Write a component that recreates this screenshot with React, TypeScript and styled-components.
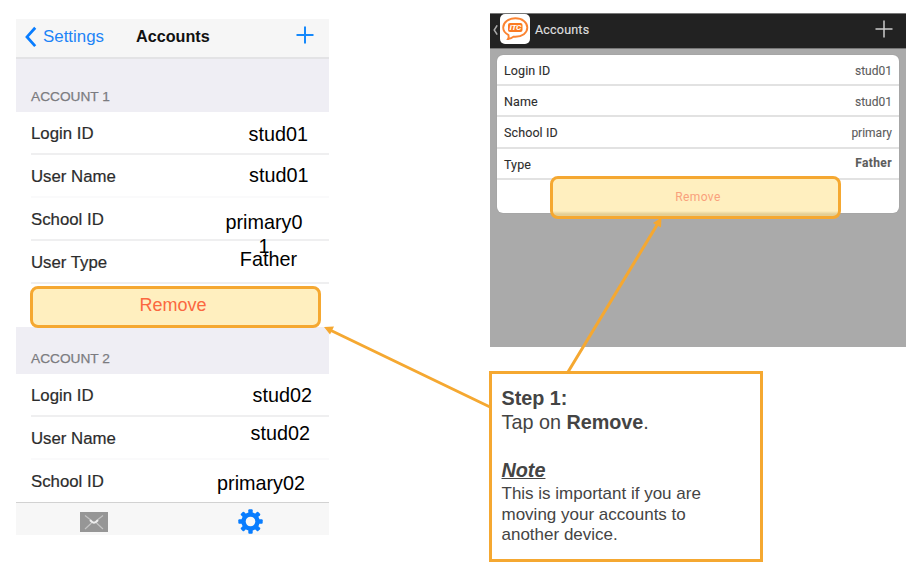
import React from "react";
import styled, { createGlobalStyle } from "styled-components";

const ORANGE = "#f5a831";

const GlobalStyle = createGlobalStyle`
  * { box-sizing: border-box; }
  body { margin: 0; background: #fff; font-family: "Liberation Sans", Arial, sans-serif; overflow: hidden; }
`;

const Page = styled.main`
  position: relative;
  width: 919px;
  height: 570px;
  display: grid;
  grid-template-columns: 313px 417px;
  column-gap: 160px;
  align-items: start;
  padding: 13px 0 0 16px;
`;

const Phone = styled.section`
  margin-top: 6px;
  display: flex;
  flex-direction: column;
  height: 516px;
  background: #fff;
`;

const NavBar = styled.header`
  flex: none;
  height: 40px;
  display: grid;
  grid-template-columns: 112px 1fr 33px;
  align-items: start;
  padding: 7px 0 0 8px;
  background: #f6f6f6;
  border-bottom: 2px solid #e3e3e5;
`;

const BackLink = styled.a`
  display: flex;
  align-items: center;
  gap: 6px;
  height: 22px;
  color: #1d84f7;
  font-size: 16.9px;
  line-height: 22px;
`;

const NavTitle = styled.h1`
  margin: 0;
  height: 22px;
  font-size: 16.2px;
  line-height: 21px;
  color: #111;
`;

const SectionHead = styled.div<{ $height: number }>`
  flex: none;
  height: ${(p) => p.$height}px;
  display: flex;
  align-items: flex-end;
  padding: 0 0 7px 15px;
  background: #efeef4;
  color: #7b7b80;
  font-size: 13.7px;
  line-height: 17px;
  -webkit-text-stroke: 0.25px #7b7b80;
`;

const Row = styled.div<{ $faint?: boolean; $last?: boolean }>`
  flex: none;
  height: ${(p) => (p.$last ? 42 : 43)}px;
  margin-left: 15px;
  display: flex;
  justify-content: space-between;
  border-bottom: ${(p) => (p.$last ? "0" : "2px")} solid ${(p) => (p.$faint ? "#fafafb" : "#efeff0")};
`;

const RowLabel = styled.span`
  padding-top: 11px;
  font-size: 16.8px;
  line-height: 21px;
  color: #2c2c2c;
  -webkit-text-stroke: 0.2px #2c2c2c;
`;

const RowValue = styled.span<{ $right: number; $top: number; $width?: number }>`
  width: ${(p) => (p.$width ? `${p.$width}px` : "auto")};
  height: 22px;
  margin: ${(p) => p.$top}px ${(p) => p.$right}px 0 0;
  text-align: center;
  overflow-wrap: anywhere;
  font-size: 19.8px;
  line-height: 24px;
  color: #000;
`;

const HighlightButton = styled.button<{ $android?: boolean }>`
  position: relative;
  flex: none;
  z-index: 1;
  display: block;
  width: 291px;
  height: ${(p) => (p.$android ? 43 : 42)}px;
  padding: ${(p) => (p.$android ? "0 0 1px 5px" : "0 5px 4px 0")};
  border: 3px solid ${ORANGE};
  border-radius: 8px;
  background: ${(p) => (p.$android ? "linear-gradient(#ffefbf 35px, #e3cf96 38px) border-box" : "#ffefbf")};
  color: ${(p) => (p.$android ? "#f9a17c" : "#fb6840")};
  font: ${(p) => (p.$android ? '12px Roboto, sans-serif' : '18px "Liberation Sans", sans-serif')};
  letter-spacing: ${(p) => (p.$android ? "0.4px" : "0")};
`;

const RemoveRow = styled.div`
  flex: none;
  height: 43px;
  padding: 2px 0 0 14px;
`;

const TabBar = styled.nav`
  flex: none;
  height: 33px;
  margin-top: auto;
  display: grid;
  grid-template-columns: 1fr 1fr;
  justify-items: center;
  align-items: center;
  padding: 5px 0 0;
  border-top: 1px solid #d2d2d2;
  background: #f7f7f7;
`;

const RightColumn = styled.div`
  display: flex;
  flex-direction: column;
  gap: 24px;
  align-items: flex-start;
`;

const Tablet = styled.section`
  width: 416px;
  height: 334px;
  margin-left: 1px;
  background: #aaa;
  font-family: Roboto, sans-serif;
`;

const ActionBar = styled.header`
  height: 36px;
  display: flex;
  align-items: center;
  padding: 0 13px 0 3px;
  border-top: 1px solid #777;
  border-bottom: 1px solid #777;
  background: #222;
  color: #ddd;
  font-size: 12.5px;
  letter-spacing: 0.2px;
`;

const BarTitle = styled.h2`
  flex: 1;
  margin: -4px 0 0 5px;
  font: inherit;
  -webkit-text-stroke: 0.2px #ddd;
`;

const BarAction = styled.span`
  display: flex;
  margin-top: -5px;
`;

const AppTile = styled.span`
  width: 30px;
  height: 30px;
  margin: -5px 0 0 2px;
  border-radius: 5px;
  background: #fff;
`;

const Card = styled.div`
  height: 158px;
  margin: 6px 7px 0;
  border-radius: 6px;
  background: #fff;
  box-shadow: 0 0 1px #888;
`;

const CardRow = styled.div`
  height: 31.2px;
  display: flex;
  align-items: center;
  justify-content: space-between;
  padding: 2px 7px 0;
  border-bottom: 2px solid #e2e2e2;
  font-size: 12.5px;
  letter-spacing: 0.1px;
  color: #2d2d2d;
  -webkit-text-stroke: 0.1px #2d2d2d;
`;

const CardValue = styled.span<{ $bold?: boolean }>`
  font-size: 12px;
  font-weight: ${(p) => (p.$bold ? 700 : 400)};
  margin-top: ${(p) => (p.$bold ? "-2px" : "0")};
  letter-spacing: ${(p) => (p.$bold ? "0.4px" : "0")};
  color: #5c5c5c;
  -webkit-text-stroke: 0.1px #5c5c5c;
`;

const CardAction = styled.div`
  display: flex;
  padding-left: 53px;
  margin-top: -4px;
`;

const Callout = styled.aside`
  width: 274px;
  height: 191px;
  border: 3px solid ${ORANGE};
  background: #fff;
  padding: 12px 9.5px;
  color: #444;
  font-size: 19.8px;
  line-height: 24px;
`;

const CalloutLine = styled.p`
  margin: 0;
`;

const NoteTitle = styled.h3`
  margin: 24px 0 0;
  font-size: 19.8px;
  line-height: 24px;
  font-style: italic;
  text-decoration: underline;
`;

const NoteText = styled.p`
  margin: 2px 0 0;
  font-size: 17px;
  line-height: 20.7px;
`;

const Arrows = styled.svg`
  position: absolute;
  inset: 0;
  z-index: 2;
  pointer-events: none;
`;

const BackChevron = () => (
  <svg width="13" height="22" viewBox="0 0 13 22">
    <path d="M11.2 1.7 3 10.9l8.2 9.2" fill="none" stroke="#087dff" strokeWidth="2.8" />
  </svg>
);

const PhonePlus = () => (
  <svg width="18" height="18" viewBox="0 0 18 18">
    <path d="M9 .5v17M.5 9h17" stroke="#1689fb" strokeWidth="2" />
  </svg>
);

const MailIcon = () => (
  <svg width="28" height="20" viewBox="0 0 28 20">
    <path d="M0 0h28v20H0z" fill="#969696" />
    <path d="M5 3.500 12 9M23 3.500 16 9M11.500 11 5 17M16.500 11l6.500 6" stroke="#c4c4c4" strokeWidth="1.200" />
    <path d="M10 8.200q4 5 8 0" fill="none" stroke="#eee" strokeWidth="2" />
  </svg>
);

const GearIcon = () => (
  <svg width="25" height="25" viewBox="-12.5 -12.5 25 25">
    <g fill="#087dff">
      {[0, 45, 90, 135].map((angle) => (
        <rect key={angle} x="-2.2" y="-12.2" width="4.4" height="24.4" rx="1" transform={`rotate(${angle})`} />
      ))}
      <circle r="9.2" />
    </g>
    <circle r="4.8" fill="#f7f7f7" />
  </svg>
);

const ChatLogo = () => (
  <svg width="30" height="30" viewBox="0 0 30 30">
    <path
      d="M8.300 20.800C5 19.300 3.200 16.700 3.200 13.600 3.200 8.200 8.400 4.300 15.300 4.300s12 3.900 12 9.300-5.100 9.200-12 9.200l-1.800-.1c-1.400 1.400-3.200 2.100-5.500 2.300.7-1.200.9-2.500.3-4.200z"
      fill="#fff"
      stroke="#fb8432"
      strokeWidth="1.900"
    />
    <rect x="8" y="9" width="14.500" height="9" rx="2" fill="#fb7a22" />
    <text x="9.500" y="16" fill="#fff" fontSize="7" fontWeight="700" fontStyle="italic" letterSpacing="-.3" textLength="11.500" lengthAdjust="spacingAndGlyphs">ITC</text>
  </svg>
);

const UpChevron = () => (
  <svg width="5" height="12" viewBox="0 0 5 12">
    <path d="M4.200.3 1.200 5l3 4.700" fill="none" stroke="#aaa" strokeWidth="1.500" />
  </svg>
);

const BarPlus = () => (
  <svg width="18" height="18" viewBox="0 0 18 18">
    <path d="M9 .5v17M.5 9h17" stroke="#ccc" strokeWidth="1.500" />
  </svg>
);

const firstAccount = [
  { label: "Login ID", value: "stud01", right: 21, top: 10 },
  { label: "User Name", value: "stud01", right: 20.5, top: 8, faint: true },
  { label: "School ID", value: "primary01", right: 25, top: 12, width: 80 },
  { label: "User Type", value: "Father", right: 32, top: 6 },
];

const secondAccount = [
  { label: "Login ID", value: "stud02", right: 17, top: 9 },
  { label: "User Name", value: "stud02", right: 19, top: 4, faint: true },
  { label: "School ID", value: "primary02", right: 24, top: 11, last: true },
];

const tabletRows = [
  { label: "Login ID", value: "stud01" },
  { label: "Name", value: "stud01" },
  { label: "School ID", value: "primary" },
  { label: "Type", value: "Father", bold: true },
];

type Entry = {
  label: string;
  value: string;
  right: number;
  top: number;
  width?: number;
  faint?: boolean;
  last?: boolean;
};

const AccountRows = ({ rows }: { rows: Entry[] }) => (
  <>
    {rows.map((row) => (
      <Row key={row.label} $faint={row.faint} $last={row.last}>
        <RowLabel>{row.label}</RowLabel>
        <RowValue $right={row.right} $top={row.top} $width={row.width}>{row.value}</RowValue>
      </Row>
    ))}
  </>
);

export default function App() {
  return (
    <>
      <GlobalStyle />
      <Page>
        <Phone>
          <NavBar>
            <BackLink><BackChevron />Settings</BackLink>
            <NavTitle>Accounts</NavTitle>
            <PhonePlus />
          </NavBar>
          <SectionHead $height={53}>ACCOUNT 1</SectionHead>
          <AccountRows rows={firstAccount} />
          <RemoveRow><HighlightButton>Remove</HighlightButton></RemoveRow>
          <SectionHead $height={47}>ACCOUNT 2</SectionHead>
          <AccountRows rows={secondAccount} />
          <TabBar><MailIcon /><GearIcon /></TabBar>
        </Phone>
        <RightColumn>
          <Tablet>
            <ActionBar>
              <UpChevron />
              <AppTile><ChatLogo /></AppTile>
              <BarTitle>Accounts</BarTitle>
              <BarAction><BarPlus /></BarAction>
            </ActionBar>
            <Card>
              {tabletRows.map((row) => (
                <CardRow key={row.label}>
                  <span>{row.label}</span>
                  <CardValue $bold={row.bold}>{row.value}</CardValue>
                </CardRow>
              ))}
              <CardAction><HighlightButton $android>Remove</HighlightButton></CardAction>
            </Card>
          </Tablet>
          <Callout>
            <CalloutLine><b>Step 1:</b></CalloutLine>
            <CalloutLine>Tap on <b>Remove</b>.</CalloutLine>
            <NoteTitle>Note</NoteTitle>
            <NoteText>This is important if you are<br />moving your accounts to<br />another device.</NoteText>
          </Callout>
        </RightColumn>
        <Arrows width="919" height="570" viewBox="0 0 919 570">
          <path d="M490 407 330 330M568 372 657 225" stroke={ORANGE} strokeWidth="3" />
          <path d="M324 327l10-.5-4 8zM661.500 217.500l-.5 10-8-4.500z" fill={ORANGE} />
        </Arrows>
      </Page>
    </>
  );
}
